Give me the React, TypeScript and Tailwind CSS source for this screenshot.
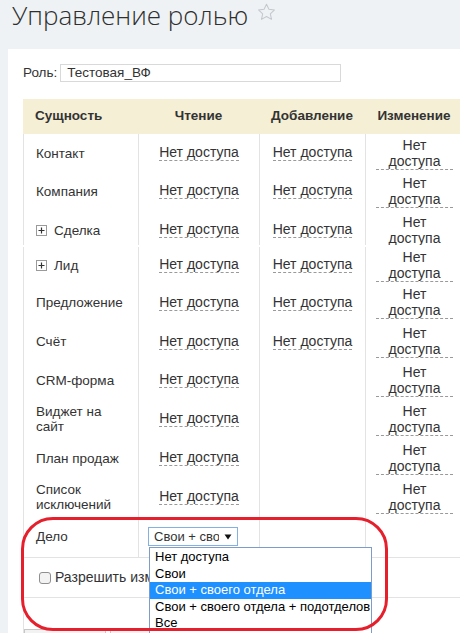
import React from "react"

type Row = {
  name: React.ReactNode
  read: boolean
  add: boolean
  edit: boolean
  h: string
}

function Plus() {
  return (
    <span className="inline-flex h-[11px] w-[11px] items-center justify-center border border-[#9a9a9a] bg-white mr-[7px]">
      <svg width="7" height="7" viewBox="0 0 7 7">
        <path d="M0.5 3.5H6.5M3.5 0.5V6.5" stroke="#333" strokeWidth="1.2" />
      </svg>
    </span>
  )
}

function Link() {
  return <span className="border-b border-dashed border-[#9a9a9a] text-[14px] leading-[15px] text-[#333]">Нет доступа</span>
}

function EditLink() {
  return (
    <span className="block w-[77px] mx-auto text-center border-b border-dashed border-[#9a9a9a] text-[14px] leading-[16px] text-[#333]">
      Нет
      <br />
      доступа
    </span>
  )
}

function Cells({ row }: { row: Row }) {
  return (
    <div className={`flex ${row.h}`}>
      <div className="w-[115px] shrink-0 border-l border-[#e3e3e3] pl-[12px] pr-[4px] flex items-center text-[13.5px] leading-[15px]">
        {row.name}
      </div>
      <div className="w-[121px] shrink-0 border-l border-[#e3e3e3] flex items-center justify-center">
        {row.read && <Link />}
      </div>
      <div className="w-[106px] shrink-0 border-l border-[#e3e3e3] flex items-center justify-center">
        {row.add && <Link />}
      </div>
      <div className="w-[98px] shrink-0 border-l border-[#e3e3e3] flex items-center justify-center">
        {row.edit && <EditLink />}
      </div>
    </div>
  )
}

const rows: Row[] = [
  { name: "Контакт", read: true, add: true, edit: true, h: "h-[38px]" },
  { name: "Компания", read: true, add: true, edit: true, h: "h-[38px]" },
]

const rowsAfter: Row[] = [
  { name: "Предложение", read: true, add: true, edit: true, h: "h-[39px]" },
  { name: "Счёт", read: true, add: true, edit: true, h: "h-[39px]" },
  { name: "CRM-форма", read: true, add: false, edit: true, h: "h-[38px]" },
  { name: <>Виджет на<br />сайт</>, read: true, add: false, edit: true, h: "h-[40px]" },
  { name: "План продаж", read: true, add: false, edit: true, h: "h-[38px]" },
  { name: <>Список<br />исключений</>, read: true, add: false, edit: true, h: "h-[40px]" },
]

export default function App() {
  return (
    <div className="relative w-[460px] h-[633px] overflow-hidden bg-[#eef2f4] font-['Liberation_Sans',Arial,sans-serif] text-[13px] text-[#333]">
      <div className="h-[49px] pl-[12px] flex items-start">
        <h1 className="font-['Open_Sans',sans-serif] font-light text-[26px] leading-[32px] -mt-[1px] text-[#2f2f2f] whitespace-nowrap">
          Управление ролью
        </h1>
        <svg className="ml-[9px] mt-[3px]" width="19" height="18" viewBox="0 0 24 23">
          <path
            d="M12 1.5l3.1 6.6 7.1.8-5.3 4.9 1.5 7.1L12 17.3l-6.4 3.6 1.5-7.1-5.3-4.9 7.1-.8z"
            fill="none"
            stroke="#c3c8ce"
            strokeWidth="1.3"
            strokeLinejoin="round"
          />
        </svg>
      </div>

      <div className="ml-[8px] w-[600px] h-[600px] bg-white pl-[15px] pt-[15px]">
        <div className="flex items-center h-[18px]">
          <span className="mr-[3px] text-[13.5px]">Роль:</span>
          <div className="w-[281px] h-[18px] border border-[#d9d9d9] pl-[6px] flex items-center text-[13.5px]">
            Тестовая_ВФ
          </div>
        </div>

        <div className="mt-[17px] w-[440px]">
          <div className="flex h-[35px] bg-[#f4efd5] font-bold text-[13.5px] items-center">
            <div className="w-[115px] pl-[12px]">Сущность</div>
            <div className="w-[121px] text-center">Чтение</div>
            <div className="w-[106px] text-center">Добавление</div>
            <div className="w-[98px] text-center">Изменение</div>
          </div>

          {rows.map((r, i) => (
            <Cells key={i} row={r} />
          ))}

          <div className="h-[35px] overflow-hidden">
            <Cells row={{ name: <><Plus />Сделка</>, read: true, add: true, edit: true, h: "h-[40px]" }} />
          </div>
          <div className="h-[2px]" />
          <Cells row={{ name: <><Plus />Лид</>, read: true, add: true, edit: true, h: "h-[36px]" }} />

          {rowsAfter.map((r, i) => (
            <Cells key={i} row={r} />
          ))}

          <div className="flex h-[40px]">
            <div className="w-[115px] shrink-0 border-l border-[#e3e3e3] pl-[12px] flex items-center text-[13.5px]">Дело</div>
            <div className="w-[121px] shrink-0 border-l border-[#e3e3e3] pl-[9px] pt-[10px]">
              <div className="w-[90px] h-[19px] border border-[#85b1e2] bg-white flex items-center">
                <span className="w-[70px] pl-[5px] overflow-hidden whitespace-nowrap">Свои + своего отдела</span>
                <svg className="ml-[5px]" width="8" height="6" viewBox="0 0 8 6">
                  <path d="M0.5 0.5H7.5L4 5.5z" fill="#111" />
                </svg>
              </div>
            </div>
            <div className="w-[106px] shrink-0 border-l border-[#e3e3e3]" />
            <div className="w-[98px] shrink-0 border-l border-[#e3e3e3]" />
          </div>
        </div>

        <div className="w-[585px] border-t border-l border-[#e3e3e3] h-[40px] flex items-center pl-[15px]">
          <span className="w-[12px] h-[12px] rounded-[3px] border border-[#8f8f8f] bg-[#f3f3f3]" />
          <span className="ml-[4px] text-[14px]">Разрешить изменять настройки</span>
        </div>
        <div className="w-[585px] border-t border-l border-[#e3e3e3] h-[40px]">
          <div className="pt-[31px] flex gap-[4px]">
            <div className="w-[82px] h-[20px] border border-[#c6c6c6] bg-[#f2f2f2]" />
            <div className="w-[84px] h-[20px] border border-[#c6c6c6] bg-[#f2f2f2]" />
          </div>
        </div>
      </div>

      <div className="absolute left-[149px] top-[547px] w-[223px] h-[90px] border border-[#7f9cc8] bg-white pt-[1px]">
        {["Нет доступа", "Свои", "Свои + своего отдела", "Свои + своего отдела + подотделов", "Все"].map((o, i) => (
          <div
            key={o}
            className={`h-[16.5px] leading-[16.5px] pl-[5px] whitespace-nowrap ${i === 2 ? "bg-[#1e90ff] text-white" : "text-black"}`}
          >
            {o}
          </div>
        ))}
      </div>

      <div className="absolute left-[21px] top-[517px] w-[367px] h-[114px] rounded-[32px] border-[3.5px] border-[#e5202c]" />
    </div>
  )
}
